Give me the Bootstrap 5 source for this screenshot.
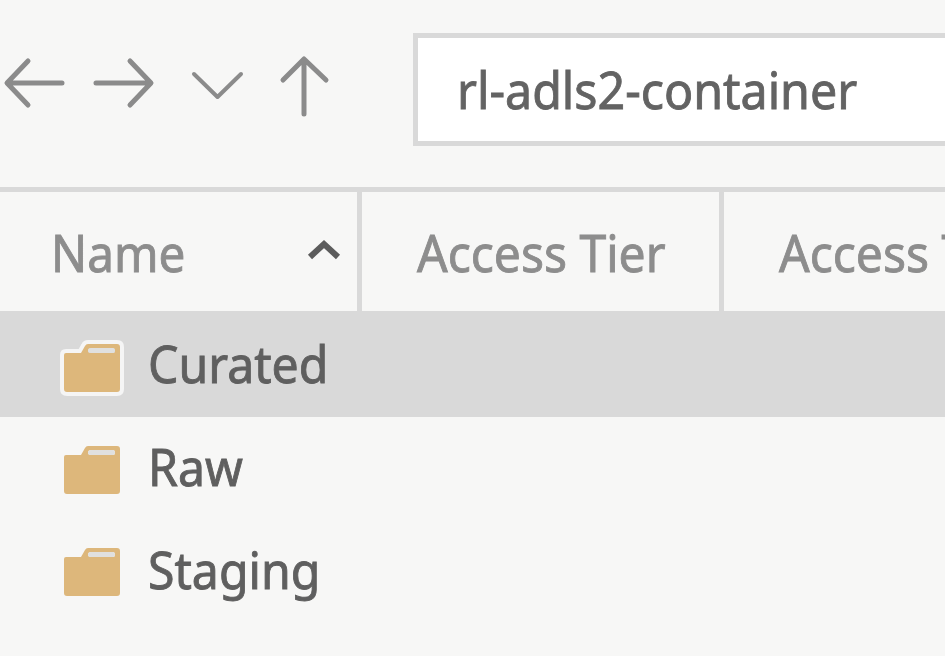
<!DOCTYPE html>
<html lang="en">
<head>
<meta charset="utf-8">
<meta name="viewport" content="width=device-width, initial-scale=1">
<title>rl-adls2-container</title>
<link href="https://cdn.jsdelivr.net/npm/bootstrap@5.3.0/dist/css/bootstrap.min.css" rel="stylesheet">
<style>
body{background:#f7f7f6;font-family:"Noto Sans","Open Sans",sans-serif;font-size:51px;line-height:1;color:#5f5f5f}
.explorer{width:945px;height:656px}
.toolbar{height:187px;padding-top:33px}
.nav-icons{width:413px;height:100px}
.address{height:113px;border:5px solid #d9d9d9;border-right:0;background:#fff;padding:26px 0 0 39px;color:#636363}
.grid-head{height:125px;border-top:5px solid #d9d9d9;border-bottom:1px solid #d9d9d9;color:#8d8d8d}
.cell{border-right:5px solid #d9d9d9;padding-top:35px;width:362px}
.cell-name{padding-left:51px}
.cell-tier{padding-left:55px}
.cell-last{padding-left:55px;border-right:0;width:800px}
.fit{display:inline-block;transform-origin:0 50%;white-space:nowrap;-webkit-text-stroke:.9px currentColor}
.fit-address{transform:scaleX(.948)}
.fit-name{transform:scaleX(.935)}
.fit-tier{transform:scaleX(.942)}
.fit-row{transform:scaleX(.945)}
.sort{margin:9px 16px 0 auto}
.entry{height:102.5px;padding-left:56px}
.entry-on{height:105px;background:#d9d9d9}
.entry svg{margin-top:5px}
.entry-on svg{margin-top:8px}
.entry-label{margin:-3px 0 0 22px}
</style>
</head>
<body>
<main class="explorer overflow-hidden">
  <header class="toolbar d-flex">
    <svg class="nav-icons flex-shrink-0" viewBox="0 33 413 100" fill="none" stroke="#8b8b8b" stroke-width="5" stroke-linecap="round" stroke-linejoin="round">
      <path d="M62 83H8M28 61L7 83L28 105"/>
      <path d="M96 83H150M130 61L151 83L130 105"/>
      <path d="M194 74L217.500 97L241 74" stroke-width="4"/>
      <path d="M304 114V60M283 80L304 59L326 80"/>
    </svg>
    <div class="address flex-grow-1"><span class="fit fit-address">rl-adls2-container</span></div>
  </header>
  <div class="grid-head d-flex overflow-hidden">
    <div class="cell cell-name d-flex flex-shrink-0">
      <span class="fit fit-name">Name</span>
      <svg class="sort" width="36" height="28" viewBox="306 236 36 28" fill="none" stroke="#5c5c5c" stroke-width="6"><path d="M311 257L325 244L339 257"/></svg>
    </div>
    <div class="cell cell-tier flex-shrink-0"><span class="fit fit-tier">Access Tier</span></div>
    <div class="cell cell-last flex-shrink-0"><span class="fit fit-tier">Access Tier</span></div>
  </div>
  <svg class="d-none"><symbol id="folder" viewBox="0 0 70 60"><path fill="#ddb77b" fill-rule="evenodd" d="M10 14H25L29 7Q30 5 32 5H61Q64 5 64 8V50Q64 53 61 53H11Q8 53 8 50V16Q8 14 10 14ZM35 9Q32 9 32 11.500Q32 14 35 14H57Q59 14 59 11.500Q59 9 57 9Z"/><path fill="#e0e0df" d="M35 9H57Q59 9 59 11.500Q59 14 57 14H35Q32 14 32 11.500Q32 9 35 9Z"/></symbol></svg>
  <div class="entry entry-on d-flex align-items-center">
    <svg width="70" height="60"><path d="M10 14H25L29 7Q30 5 32 5H61Q64 5 64 8V50Q64 53 61 53H11Q8 53 8 50V16Q8 14 10 14Z" fill="none" stroke="#f5f5f5" stroke-width="8" stroke-linejoin="round"/><use href="#folder"/></svg>
    <span class="fit fit-row entry-label">Curated</span>
  </div>
  <div class="entry d-flex align-items-center"><svg width="70" height="60"><use href="#folder"/></svg><span class="fit fit-row entry-label">Raw</span></div>
  <div class="entry d-flex align-items-center"><svg width="70" height="60"><use href="#folder"/></svg><span class="fit fit-row entry-label">Staging</span></div>
</main>
<script src="https://cdn.jsdelivr.net/npm/bootstrap@5.3.0/dist/js/bootstrap.bundle.min.js"></script>
</body>
</html>
